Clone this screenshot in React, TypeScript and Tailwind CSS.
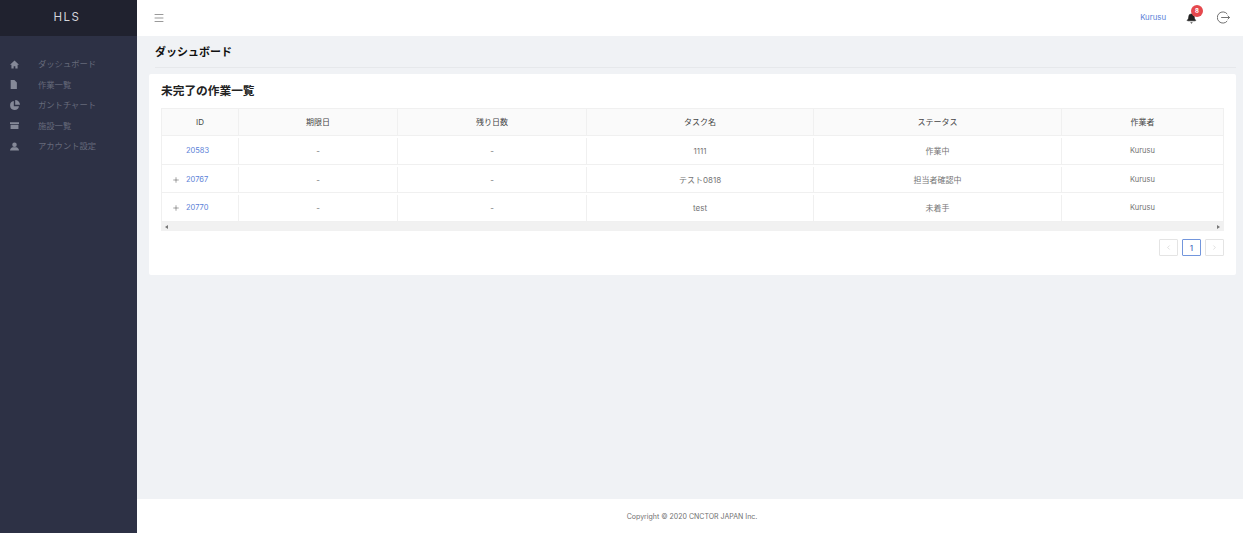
import type { ReactNode } from "react";
import { Menu, ChevronLeft, ChevronRight, Bell, Plus } from "lucide-react";

const nav = [
  { label: "ダッシュボード", icon: "home" },
  { label: "作業一覧", icon: "file" },
  { label: "ガントチャート", icon: "pie" },
  { label: "施設一覧", icon: "box" },
  { label: "アカウント設定", icon: "user" },
];

function NavIcon({ name }: { name: string }) {
  const cls = "w-[9px] h-[9px] text-[#858998]";
  if (name === "home")
    return (
      <svg viewBox="0 0 16 16" className={cls} fill="currentColor">
        <path d="M8 1 0 8.500h2.500V15h4v-4h3v4h4V8.500H16z" />
      </svg>
    );
  if (name === "file")
    return (
      <svg viewBox="0 0 16 16" className="w-[9px] h-[9px] -ml-[2px] text-[#858998]" fill="currentColor">
        <path d="M3 0h6.500L14 4.500V16H3z" />
      </svg>
    );
  if (name === "pie")
    return (
      <svg viewBox="0 0 16 16" className="w-[11px] h-[11px] text-[#858998]" fill="currentColor">
        <path d="M7 1.500a6.500 6.500 0 1 0 7.500 7.500H7z" />
        <path d="M9 0v7h7a7 7 0 0 0-7-7z" />
      </svg>
    );
  if (name === "box")
    return (
      <svg viewBox="0 0 16 16" className={cls} fill="currentColor">
        <path d="M0 2h16v3.500H0zM1 6.500h14V14H1z" />
      </svg>
    );
  return (
    <svg viewBox="0 0 16 16" className={cls} fill="currentColor">
      <circle cx="8" cy="5" r="4" />
      <path d="M0 15c0-3 3-5 5-5.500h6c2 .5 5 2.500 5 5.500z" />
    </svg>
  );
}

const columns = [
  { title: "ID", w: "w-[77px]" },
  { title: "期限日", w: "w-[159px]" },
  { title: "残り日数", w: "w-[189px]" },
  { title: "タスク名", w: "w-[227px]" },
  { title: "ステータス", w: "w-[248px]" },
  { title: "作業者", w: "flex-1" },
];

const rows = [
  { id: "20583", expand: false, task: "1111", status: "作業中", h: "h-[29px]" },
  { id: "20767", expand: true, task: "テスト0818", status: "担当者確認中", h: "h-[28px]" },
  { id: "20770", expand: true, task: "test", status: "未着手", h: "h-[29px]" },
];

function Cell({ w, children }: { w: string; children?: ReactNode }) {
  return (
    <div className={`${w} flex items-center justify-center border-r border-[#f0f0f0] last:border-r-0`}>
      {children}
    </div>
  );
}

export default function App() {
  return (
    <div
      className="flex w-[1243px] h-[533px] overflow-hidden bg-[#f0f2f5] text-[8px] text-[#757575]"
      style={{ fontFamily: 'Inter, "Noto Sans CJK JP", sans-serif' }}
    >
      <aside className="w-[137px] shrink-0 bg-[#2d3145] flex flex-col">
        <div className="h-[36px] bg-[#20222f] flex items-center justify-center pr-[3px] text-[11.500px] tracking-[1.600px] text-[#d4d5da]">
          HLS
        </div>
        <nav className="pt-[18px] flex flex-col">
          {nav.map((n) => (
            <div key={n.label} className="h-[20.500px] flex items-center text-[8.300px] text-[#666a7b]">
              <div className="w-[38px] pl-[9px] flex items-center">
                <div className="w-[11px] flex items-center justify-center">
                  <NavIcon name={n.icon} />
                </div>
              </div>
              <span>{n.label}</span>
            </div>
          ))}
        </nav>
      </aside>

      <div className="flex-1 flex flex-col min-w-0">
        <header className="h-[36px] shrink-0 bg-white flex items-center justify-between pl-[16px] pr-[13px] pb-[1px]">
          <Menu className="w-[12px] h-[12px] text-[#555555]" strokeWidth={1.200} />
          <div className="flex items-center">
            <span className="text-[#5b7fd8] text-[7.800px] mr-[20px] pt-[1px]">Kurusu</span>
            <div className="relative mr-[20px] pt-[1px]">
              <Bell className="w-[11px] h-[11px] text-[#222222]" fill="#222222" strokeWidth={1.500} />
              <span className="absolute -top-[7px] -right-[6px] w-[12px] h-[12px] rounded-full bg-[#e5484d] text-white text-[6px] font-bold flex items-center justify-center">
                8
              </span>
            </div>
            <svg viewBox="0 0 14 14" className="w-[13px] h-[13px] text-[#555555]" fill="none" stroke="currentColor" strokeWidth="0.900">
              <path d="M11 3.200A6 6 0 1 0 11 10.800" />
              <path d="M4.500 7h9M11.500 5l2 2-2 2" />
            </svg>
          </div>
        </header>

        <main className="flex-1 flex flex-col pl-[12px] pr-[7px]">
          <div className="h-[32px] ml-[6px] pt-[2px] flex items-center border-b border-[#e6e8eb]">
            <h1 className="text-[11px] font-bold text-[#111111]">ダッシュボード</h1>
          </div>
          <section className="mt-[6px] h-[201px] bg-white rounded-[2px] px-[12px] pt-[9px]">
            <h2 className="text-[11.700px] font-bold text-[#222222] leading-[16px]">未完了の作業一覧</h2>
            <div className="mt-[9px] border-t border-l border-r border-[#f0f0f0]">
              <div className="flex h-[27px] bg-[#fafafa] border-b border-[#f0f0f0] text-[#444444]">
                {columns.map((c) => (
                  <Cell key={c.title} w={c.w}>
                    {c.title}
                  </Cell>
                ))}
              </div>
              {rows.map((r) => (
                <div key={r.id} className={`flex ${r.h} pt-[2px] border-b border-[#f0f0f0]`}>
                  <Cell w={columns[0].w}>
                    <div className="flex items-center gap-[6px] w-full pl-[10px]">
                      <Plus className={`w-[8px] h-[8px] text-[#444444] ${r.expand ? "" : "invisible"}`} strokeWidth={1.500} />
                      <span className="text-[#5b7fd8] text-[7.500px]">{r.id}</span>
                    </div>
                  </Cell>
                  <Cell w={columns[1].w}>-</Cell>
                  <Cell w={columns[2].w}>-</Cell>
                  <Cell w={columns[3].w}>{r.task}</Cell>
                  <Cell w={columns[4].w}>{r.status}</Cell>
                  <Cell w={columns[5].w}>
                    <span className="text-[7.500px]">Kurusu</span>
                  </Cell>
                </div>
              ))}
              <div className="h-[9px] -mx-[1px] bg-[#f1f1f1] flex items-center justify-between px-[4px]">
                <span className="w-0 h-0 border-y-[2px] border-y-transparent border-r-[3px] border-r-[#777777]" />
                <span className="w-0 h-0 border-y-[2px] border-y-transparent border-l-[3px] border-l-[#777777]" />
              </div>
            </div>
            <div className="mt-[8px] flex justify-end gap-[4px]">
              <div className="w-[19px] h-[17px] border border-[#e4e4e4] rounded-[1px] flex items-center justify-center">
                <ChevronLeft className="w-[7px] h-[7px] text-[#cccccc]" />
              </div>
              <div className="w-[19px] h-[17px] border border-[#7396dc] rounded-[1px] flex items-center justify-center text-[#4a6fc0] font-medium">
                1
              </div>
              <div className="w-[19px] h-[17px] border border-[#e4e4e4] rounded-[1px] flex items-center justify-center">
                <ChevronRight className="w-[7px] h-[7px] text-[#cccccc]" />
              </div>
            </div>
          </section>
        </main>

        <footer className="h-[34px] shrink-0 bg-white flex items-center justify-center pl-[4px] pt-[2px] text-[7px] text-[#707070]">
          Copyright © 2020 CNCTOR JAPAN Inc.
        </footer>
      </div>
    </div>
  );
}
